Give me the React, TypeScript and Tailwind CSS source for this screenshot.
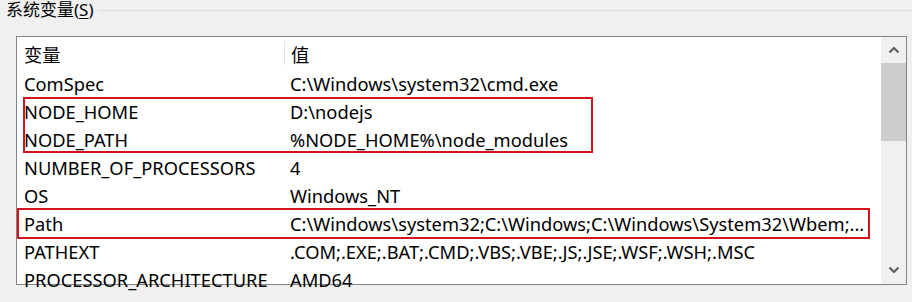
const rows: [string, string][] = [
  ["ComSpec", "C:\\Windows\\system32\\cmd.exe"],
  ["NODE_HOME", "D:\\nodejs"],
  ["NODE_PATH", "%NODE_HOME%\\node_modules"],
  ["NUMBER_OF_PROCESSORS", "4"],
  ["OS", "Windows_NT"],
  ["Path", "C:\\Windows\\system32;C:\\Windows;C:\\Windows\\System32\\Wbem;..."],
  ["PATHEXT", ".COM;.EXE;.BAT;.CMD;.VBS;.VBE;.JS;.JSE;.WSF;.WSH;.MSC"],
  ["PROCESSOR_ARCHITECTURE", "AMD64"],
];

function Chevron({ up }: { up?: boolean }) {
  return (
    <svg width="12" height="8" viewBox="0 0 12 8">
      <path
        d={up ? "M1.5 6.5 L6 2 L10.5 6.5" : "M1.5 1.5 L6 6 L10.5 1.5"}
        fill="none"
        stroke="#606060"
        strokeWidth="2.2"
      />
    </svg>
  );
}

export default function App() {
  return (
    <div className="relative h-[302px] w-[912px] overflow-hidden bg-[#f0f0f0] font-['Noto_Sans','Noto_Sans_CJK_SC',sans-serif] text-[18.3px] text-black">
      {/* group box caption */}
      <div className="-mt-[4px] flex h-[26px] items-center">
        <span className="ml-[6px] text-[17px] leading-none">
          系统变量(<span className="underline underline-offset-2">S</span>)
        </span>
        <div className="ml-[4px] mt-[2px] h-px flex-1 bg-[#dcdcdc]" />
      </div>

      {/* list view */}
      <div className="relative ml-[16px] mt-[14px] flex h-[249px] w-[891px] border border-[#838383] bg-white">
        <div className="flex w-[864px] flex-col">
          <div className="flex h-[31px] shrink-0 items-center">
            <div className="w-[267px] pl-[7px] pt-[4px]">变量</div>
            <div className="h-[24px] w-px bg-[#e5e5e5]" />
            <div className="pl-[6px] pt-[4px]">值</div>
          </div>
          {rows.map(([name, value]) => (
            <div key={name} className="flex h-[28px] shrink-0 items-center whitespace-nowrap pt-[4px]">
              <div className="w-[267px] pl-[7px]">{name}</div>
              <div className="pl-[6px]">{value}</div>
            </div>
          ))}
        </div>

        {/* scrollbar */}
        <div className="flex w-[25px] flex-col bg-[#f0f0f0]">
          <div className="flex h-[26px] items-center justify-center">
            <Chevron up />
          </div>
          <div className="h-[78px] bg-[#cdcdcd]" />
          <div className="flex-1" />
          <div className="flex h-[28px] items-center justify-center">
            <Chevron />
          </div>
        </div>

        {/* red highlight boxes */}
        <div className="absolute left-[6px] top-[60px] h-[56px] w-[570px] border-2 border-[#d2141c]" />
        <div className="absolute left-0 top-[171px] h-[31px] w-[853px] border-2 border-[#d2141c]" />
      </div>
    </div>
  );
}
